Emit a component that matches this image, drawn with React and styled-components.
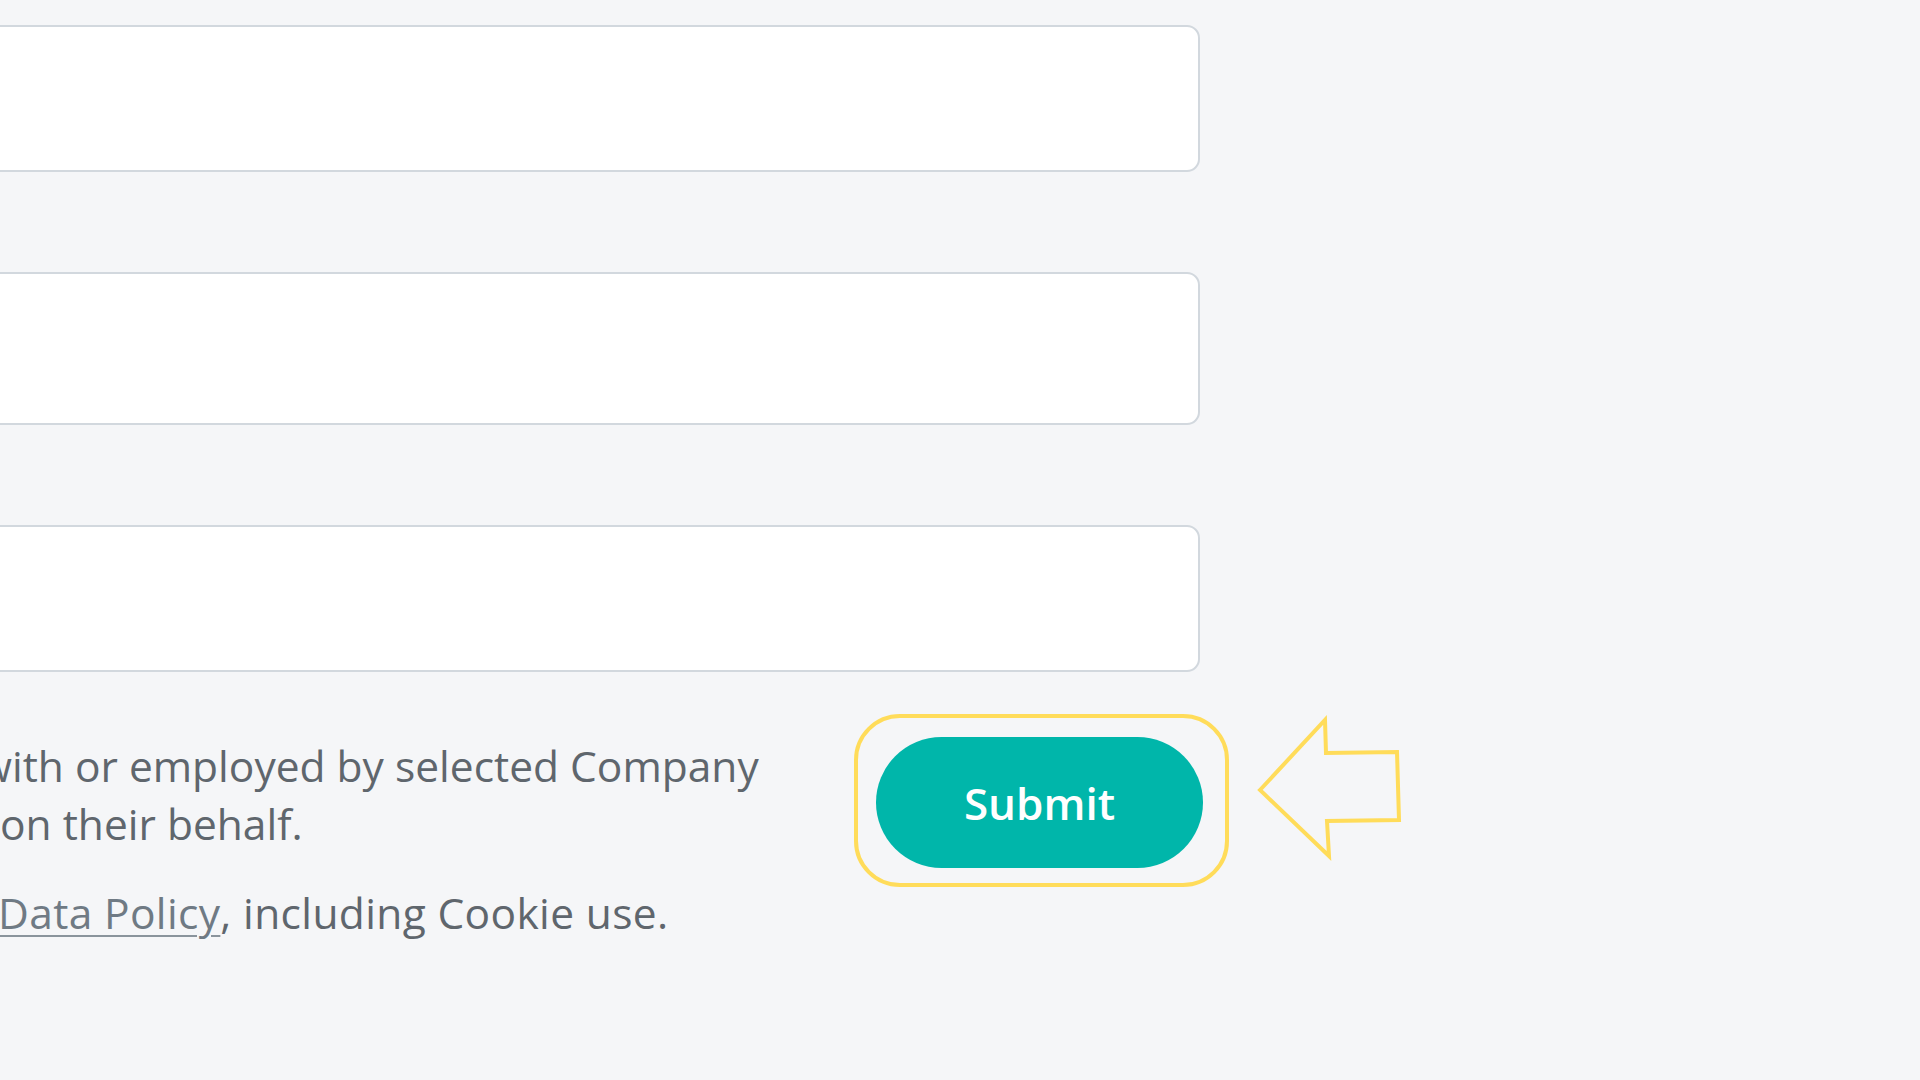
import React from "react";
import styled, { createGlobalStyle } from "styled-components";

const GlobalStyle = createGlobalStyle`
  html, body {
    margin: 0;
    padding: 0;
    width: 1920px;
    height: 1080px;
    overflow: hidden;
    background: #f5f6f8;
    font-family: "Open Sans", "Noto Sans", Arial, sans-serif;
  }
`;

const Page = styled.div`
  width: 1920px;
  height: 1080px;
  padding-top: 25px;
  box-sizing: border-box;
`;

const FormColumn = styled.form`
  width: 1220px;
  margin-left: -20px;
  display: flex;
  flex-direction: column;
`;

const Fields = styled.div`
  display: flex;
  flex-direction: column;
  gap: 100px;
`;

const Input = styled.input`
  height: ${(p) => p.h || 147}px;
  box-sizing: border-box;
  border: 2px solid #d2d8de;
  border-radius: 13px;
  background: #ffffff;
  padding: 0 28px;
  font-size: 40px;
  font-family: inherit;
  outline: none;
`;

const Footer = styled.div`
  margin-top: 63px;
  display: flex;
  justify-content: space-between;
  align-items: flex-start;
  padding-left: 20px;
`;

const Legal = styled.div`
  color: #5f666d;
  font-size: 42.5px;
  line-height: 58px;
  margin-top: 2px;
`;

const Para = styled.p`
  margin: 0 0 ${(p) => p.gap || 0}px 0;
`;

const Line = styled.span`
  display: block;
  white-space: nowrap;
  margin-left: ${(p) => p.offset || 0}px;
  letter-spacing: ${(p) => p.track || 0}px;
`;

const Link = styled.a`
  color: #6f7a84;
  text-decoration: underline;
  text-decoration-color: #8a949c;
  text-underline-offset: 6px;
  text-decoration-thickness: 2px;
`;

const ButtonWrap = styled.div`
  position: relative;
  margin-top: 2px;
  margin-right: -3px;
`;

const SubmitButton = styled.button`
  width: 327px;
  height: 131px;
  border: none;
  border-radius: 66px;
  background: #00b6aa;
  color: #ffffff;
  font-family: "Open Sans", "Noto Sans", Arial, sans-serif;
  font-weight: 600;
  font-size: 44px;
  cursor: pointer;
  padding: 0;
`;

const Highlight = styled.div`
  position: absolute;
  top: -23px;
  left: -22px;
  right: -26px;
  bottom: -19px;
  border: 4px solid #ffdc5a;
  border-radius: 46px;
  pointer-events: none;
`;

const ArrowMark = styled.svg`
  position: absolute;
  left: 379px;
  top: -22px;
  pointer-events: none;
`;

export default function App() {
  return (
    <Page>
      <GlobalStyle />
      <FormColumn onSubmit={(e) => e.preventDefault()}>
        <Fields>
          <Input type="text" h={147} />
          <Input type="email" h={153} />
          <Input type="text" h={147} />
        </Fields>
        <Footer>
          <Legal>
            <Para gap={31}>
              <Line offset={-21}>with or employed by selected Company</Line>
              <Line offset={0}>on their behalf.</Line>
            </Para>
            <Para>
              <Line offset={-2} track={0.35}>
                <Link href="#">Data Policy</Link>, including Cookie use.
              </Line>
            </Para>
          </Legal>
          <ButtonWrap>
            <SubmitButton type="submit">Submit</SubmitButton>
            <Highlight />
            <ArrowMark width="150" height="146" viewBox="0 0 150 146">
              <polygon
                points="5,75 70,5 71,38 142,37 144,105 72,106 74,141"
                fill="none"
                stroke="#ffdc5a"
                strokeWidth="4"
                strokeLinejoin="miter"
              />
            </ArrowMark>
          </ButtonWrap>
        </Footer>
      </FormColumn>
    </Page>
  );
}
